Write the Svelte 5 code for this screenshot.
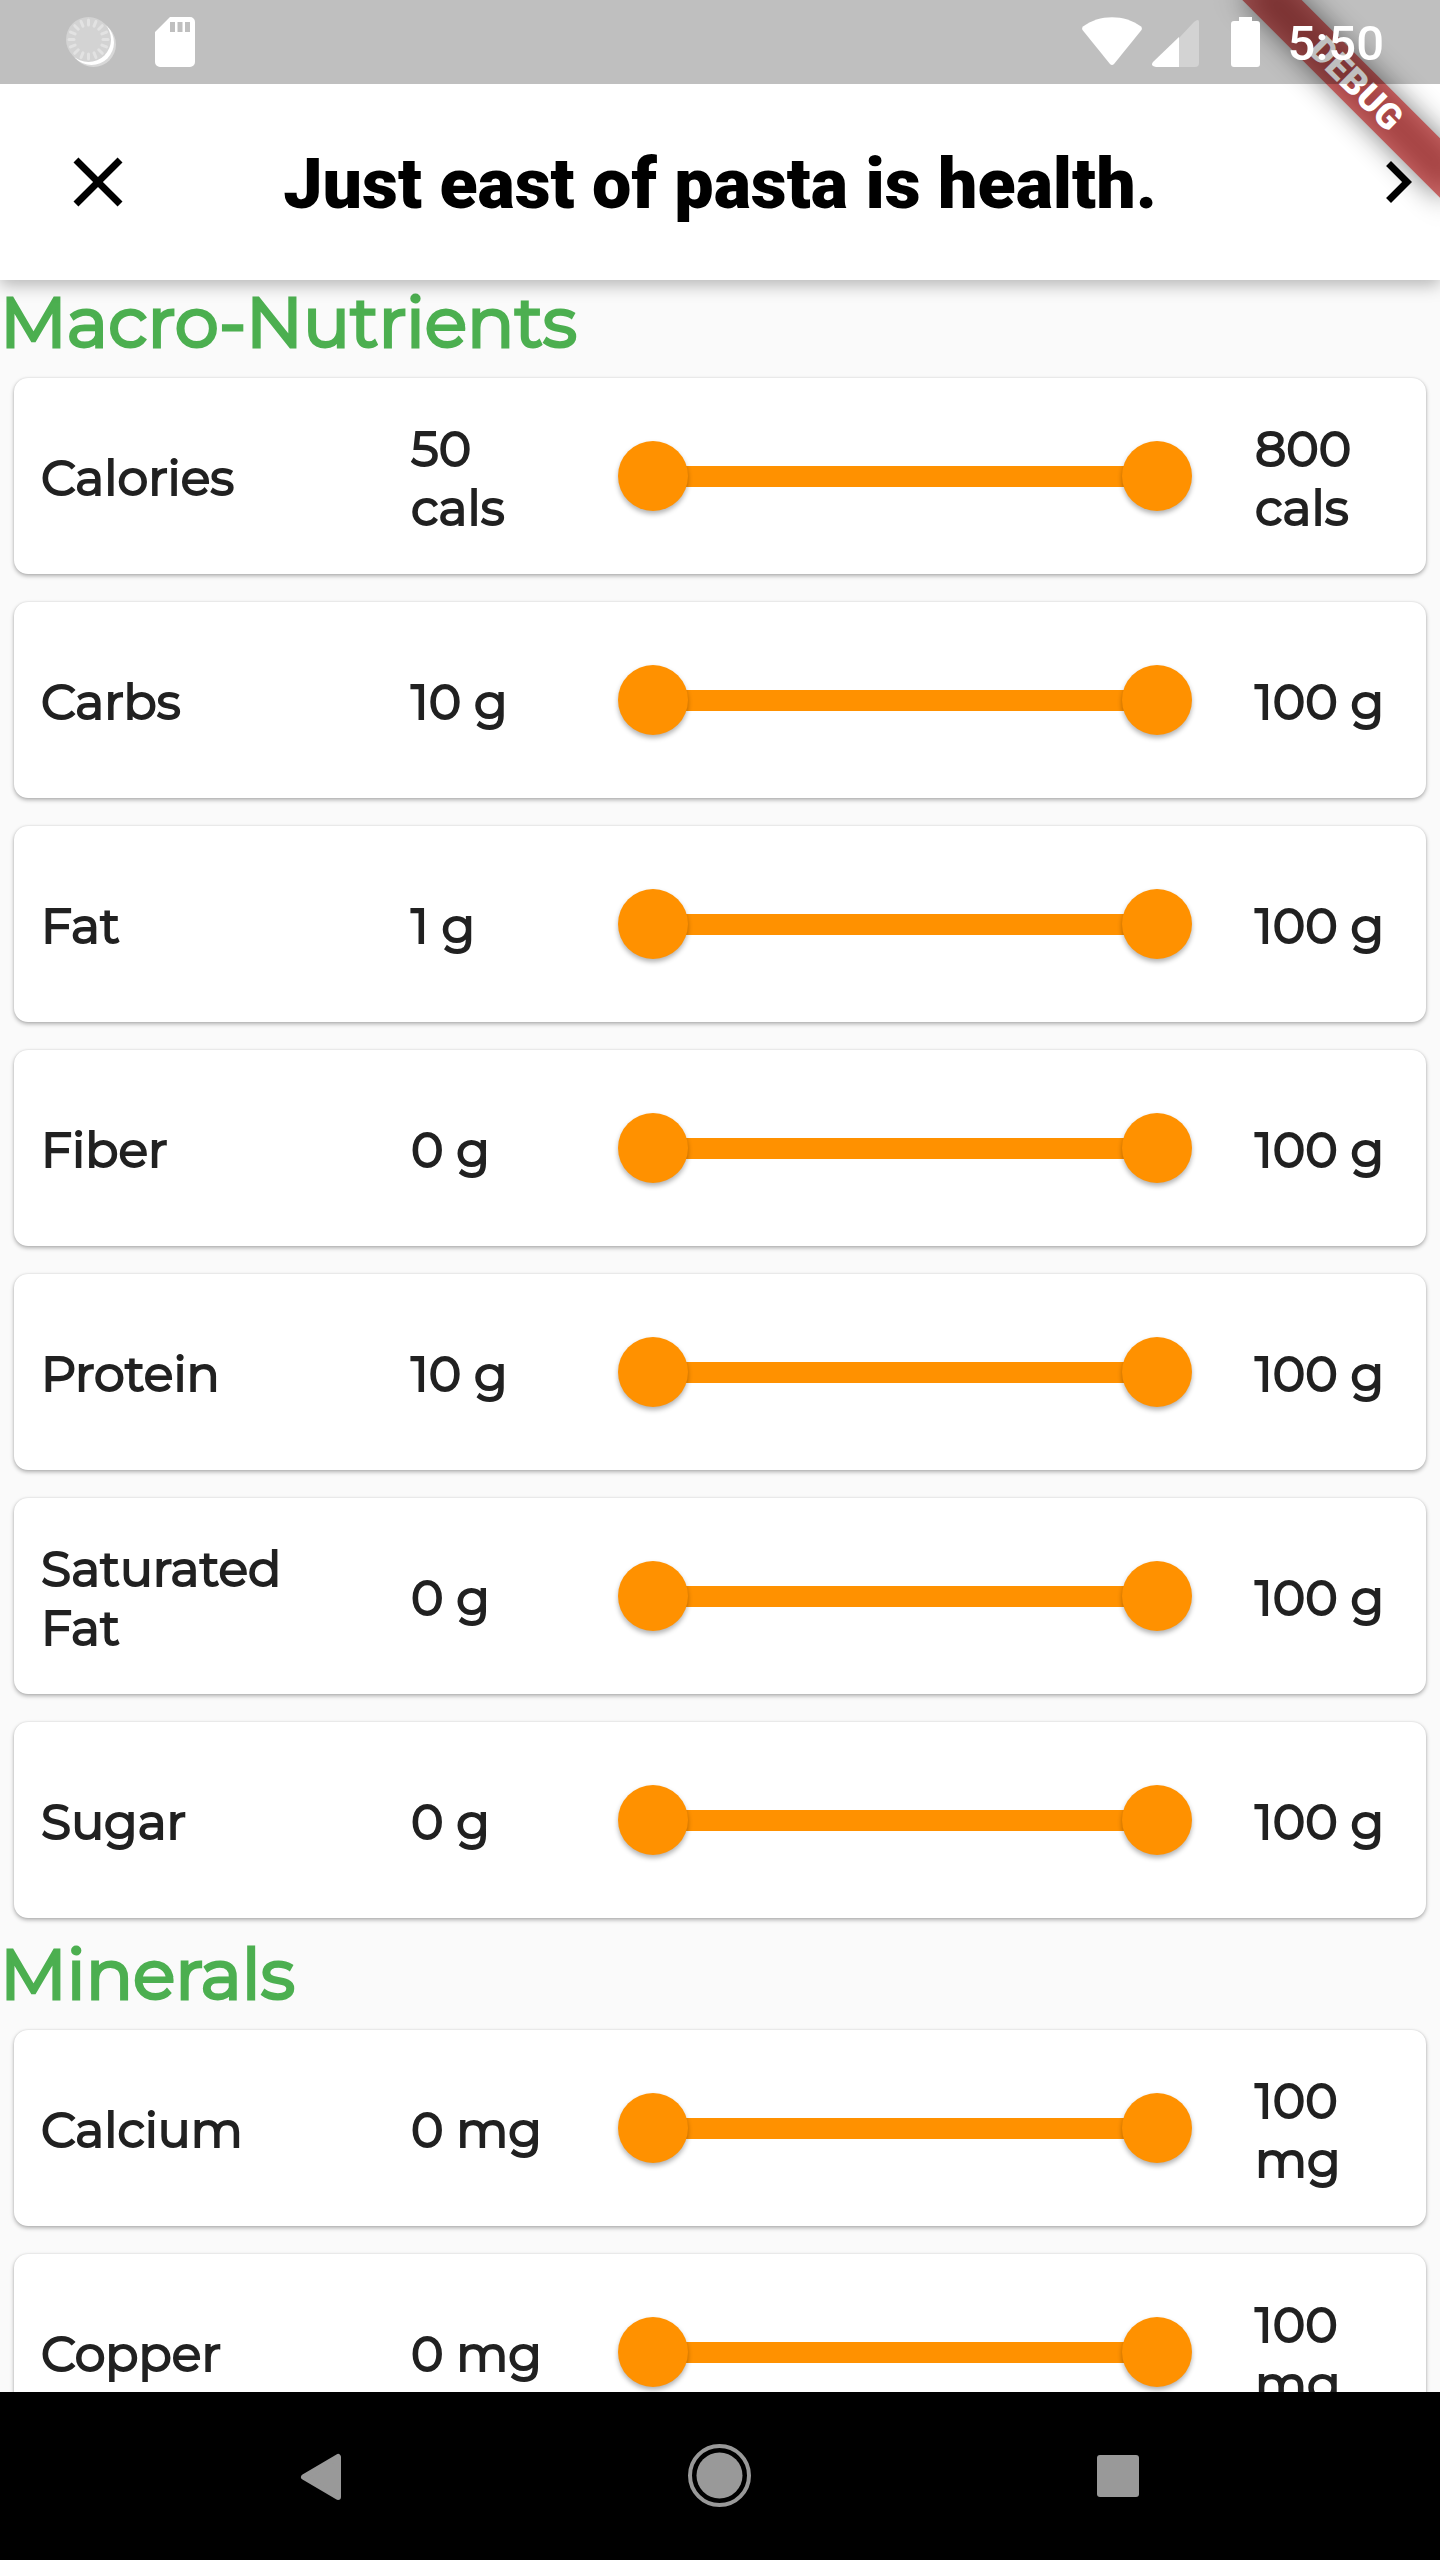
<script>
  let sections = $state([
    {
      title: 'Macro-Nutrients',
      rows: [
        { name: 'Calories', unit: 'cals', min: 50, max: 800, low: 50, high: 800 },
        { name: 'Carbs', unit: 'g', min: 10, max: 100, low: 10, high: 100 },
        { name: 'Fat', unit: 'g', min: 1, max: 100, low: 1, high: 100 },
        { name: 'Fiber', unit: 'g', min: 0, max: 100, low: 0, high: 100 },
        { name: 'Protein', unit: 'g', min: 10, max: 100, low: 10, high: 100 },
        { name: 'Saturated Fat', unit: 'g', min: 0, max: 100, low: 0, high: 100 },
        { name: 'Sugar', unit: 'g', min: 0, max: 100, low: 0, high: 100 }
      ]
    },
    {
      title: 'Minerals',
      rows: [
        { name: 'Calcium', unit: 'mg', min: 0, max: 100, low: 0, high: 100 },
        { name: 'Copper', unit: 'mg', min: 0, max: 100, low: 0, high: 100 }
      ]
    }
  ]);

  const ticks = Array.from({ length: 16 }, (_, i) => i * 22.5);
  const share = (row, value) => ((value - row.min) / (row.max - row.min)) * 100;
</script>

<div class="screen">
  <div class="top">
    <div class="status">
      <div class="group notices">
        <svg width="50" height="50" viewBox="0 0 50 50" aria-hidden="true">
          <circle cx="27.500" cy="27.500" r="22.500" fill="#d8d8d8" />
          <circle cx="25.500" cy="25.500" r="22.500" fill="#fff" />
          <circle cx="22.500" cy="22.500" r="22.500" fill="#d3d3d3" />
          {#each ticks as angle}
            <path d="M22.500 3v5" stroke="#e2e2e2" stroke-width="3" stroke-linecap="round" transform="rotate({angle} 22.500 22.500)" />
          {/each}
        </svg>
        <svg width="40" height="50" viewBox="0 0 40 50" aria-hidden="true">
          <path fill="#fff" fill-rule="evenodd" d="M15 0H35a5 5 0 0 1 5 5V45a5 5 0 0 1-5 5H5a5 5 0 0 1-5-5V15ZM15 5V15H20V5ZM22.500 5V15H27.500V5ZM30 5V15H35V5Z" />
        </svg>
      </div>
      <div class="group system">
        <svg width="60" height="50" viewBox="0 0 60 50" aria-hidden="true">
          <path fill="#fff" d="M1 9.500C17-3 43-3 59 9.500q1.500 1.500.5 3.500L32 47q-2 2-4 0L.5 13q-1-2 .5-3.500Z" />
        </svg>
        <svg class="signal" width="47" height="50" viewBox="0 0 47 50" aria-hidden="true">
          <path fill="#d3d3d3" d="M27 21 42 5q5-4 5 0V46q0 4-4 4H27Z" />
          <path fill="#fff" d="M27 20V50H4q-6-1-3-5Z" />
        </svg>
        <svg class="battery" width="29" height="50" viewBox="0 0 29 50" aria-hidden="true">
          <path fill="#fff" d="M8 0H21V4H26a3 3 0 0 1 3 3V47a3 3 0 0 1-3 3H3a3 3 0 0 1-3-3V7a3 3 0 0 1 3-3H8Z" />
        </svg>
        <time>5:50</time>
      </div>
    </div>
    <header>
      <button class="close" aria-label="Close">
        <svg width="84" height="84" viewBox="0 0 24 24" aria-hidden="true"><path d="M19 6.410 17.590 5 12 10.590 6.410 5 5 6.410 10.590 12 5 17.590 6.410 19 12 13.410 17.590 19 19 17.590 13.410 12z" /></svg>
      </button>
      <h1>Just east of pasta is health.</h1>
      <button class="next" aria-label="Next">
        <svg width="84" height="84" viewBox="0 0 24 24" aria-hidden="true"><path d="M10 6 8.590 7.410 13.170 12l-4.580 4.590L10 18l6-6z" /></svg>
      </button>
    </header>
    <div class="corner"><div class="ribbon">DEBUG</div></div>
  </div>

  <main>
    {#each sections as section}
      <section>
        <h2>{section.title}</h2>
        {#each section.rows as row}
          <div class="card">
            <div class="text name">{row.name}</div>
            <div class="text">{row.low} {row.unit}</div>
            <div class="slider">
              <div class="rail">
                <div class="fill" style="margin-left: {share(row, row.low)}%; width: {share(row, row.high) - share(row, row.low)}%"></div>
              </div>
              <input type="range" aria-label="{row.name} minimum" min={row.min} max={row.max} bind:value={row.low} />
              <input type="range" aria-label="{row.name} maximum" min={row.min} max={row.max} bind:value={row.high} />
            </div>
            <div class="text">{row.high} {row.unit}</div>
          </div>
        {/each}
      </section>
    {/each}
  </main>

  <nav>
    <button aria-label="Back">
      <svg width="64" height="64" viewBox="0 0 64 64" aria-hidden="true"><path fill="#999" stroke="#999" stroke-width="6" stroke-linejoin="round" d="M48 13v40L14 33Z" /></svg>
    </button>
    <button aria-label="Home">
      <svg width="64" height="64" viewBox="0 0 64 64" aria-hidden="true"><circle cx="31.500" cy="31.500" r="29.500" fill="none" stroke="#999" stroke-width="4" /><circle cx="31.500" cy="31.500" r="23" fill="#999" /></svg>
    </button>
    <button aria-label="Recent apps">
      <svg width="64" height="64" viewBox="0 0 64 64" aria-hidden="true"><rect x="11" y="11" width="42" height="42" rx="3" fill="#999" /></svg>
    </button>
  </nav>
</div>

<style>
  :global(body) {
    margin: 0;
    background: #fafafa;
  }

  .screen {
    display: flex;
    flex-direction: column;
    height: 100vh;
    color: #212121;
    font-family: Montserrat, Inter, sans-serif;
  }

  button {
    display: grid;
    place-items: center;
    padding: 0;
    border: 0;
    background: none;
  }

  svg {
    display: block;
    flex: none;
  }

  .top {
    position: relative;
    z-index: 1;
    flex: none;
    overflow: hidden;
    background: #fff;
    box-shadow: 0 5px 16px rgba(0, 0, 0, 0.28);
  }

  .status {
    position: relative;
    z-index: 2;
    display: flex;
    justify-content: space-between;
    align-items: center;
    height: 84px;
    padding: 0 56px 0 66px;
    background: rgba(0, 0, 0, 0.25);
  }

  .group {
    display: flex;
    align-items: center;
  }

  .notices {
    gap: 39px;
  }

  .system {
    gap: 10px;
  }

  .battery {
    margin: 0 18px 0 22px;
  }

  time {
    padding-top: 4px;
    color: #fff;
    font: 500 49px/80px Roboto, sans-serif;
  }

  header {
    display: grid;
    grid-template-columns: 196px 1fr 196px;
    align-items: center;
    height: 196px;
  }

  .next {
    justify-self: end;
  }

  h1 {
    margin: 0;
    padding-top: 4px;
    color: #000;
    font: 900 70px/84px Roboto, sans-serif;
    text-align: center;
    white-space: nowrap;
  }

  .corner {
    position: absolute;
    z-index: 1;
    top: 0;
    right: 0;
    display: grid;
    place-content: center;
    width: 168px;
    height: 168px;
    pointer-events: none;
  }

  .ribbon {
    position: relative;
    width: 280px;
    height: 42px;
    color: #fff;
    font: 900 36px/42px Roboto, sans-serif;
    text-align: center;
    transform: rotate(45deg);
  }

  .ribbon::before,
  .ribbon::after {
    content: '';
    position: absolute;
    z-index: -1;
    inset: 0;
  }

  .ribbon::before {
    background: rgba(0, 0, 0, 0.5);
    filter: blur(14px);
  }

  .ribbon::after {
    background: rgba(183, 28, 28, 0.63);
  }

  main {
    flex: 1;
    min-height: 0;
    overflow-y: auto;
    scrollbar-width: none;
  }

  h2 {
    margin: 0;
    color: #4caf50;
    font-size: 70px;
    font-weight: 400;
    line-height: 84px;
    -webkit-text-stroke: 3px #4caf50;
  }

  section {
    display: flow-root;
  }

  .card {
    display: grid;
    grid-template-columns: 342px 152px 1fr 143px;
    column-gap: 28px;
    align-items: center;
    min-height: 196px;
    margin: 14px 14px 28px;
    padding: 0 28px 0 27px;
    box-sizing: border-box;
    border-radius: 14px;
    background: #fff;
    box-shadow: 0 2px 4px rgba(0, 0, 0, 0.3), 0 0 2px rgba(0, 0, 0, 0.12);
  }

  .card:last-child {
    margin-bottom: 14px;
  }

  .text {
    padding-top: 3px;
    font-size: 49px;
    font-weight: 400;
    line-height: 59px;
    -webkit-text-stroke: 2px #212121;
  }

  .name {
    padding-right: 28px;
  }

  .slider {
    display: grid;
    align-items: center;
    margin: 0 35px 0 27px;
  }

  .slider > * {
    grid-area: 1 / 1;
  }

  .rail {
    margin: 0 35px;
  }

  .fill {
    height: 21px;
    background: #ff9100;
  }

  input {
    width: 100%;
    height: 70px;
    margin: 0;
    background: none;
    appearance: none;
    pointer-events: none;
  }

  input::-webkit-slider-thumb {
    width: 70px;
    height: 70px;
    border-radius: 50%;
    background: #ff9100;
    box-shadow: 0 3px 5px rgba(0, 0, 0, 0.3);
    appearance: none;
    pointer-events: auto;
  }

  nav {
    display: flex;
    justify-content: center;
    align-items: center;
    gap: 334px;
    flex: none;
    height: 168px;
    background: #000;
  }
</style>
